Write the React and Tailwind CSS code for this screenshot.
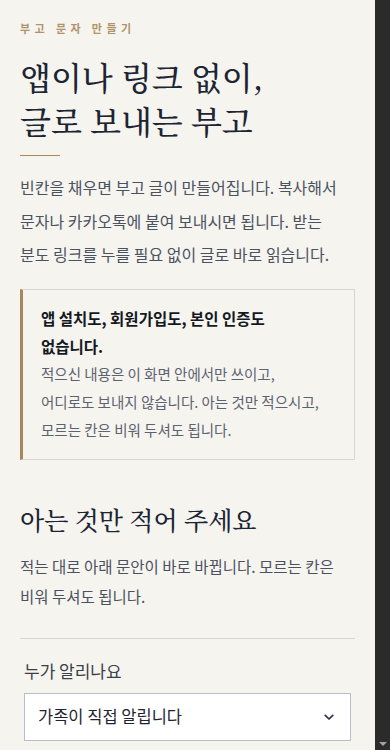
const FONT = { fontFamily: '"Noto Sans CJK KR", "Noto Sans", sans-serif' };
const SERIF = { fontFamily: '"Noto Serif CJK KR", "Noto Sans CJK KR", serif' };

function Chevron() {
  return (
    <svg width="12" height="12" viewBox="0 0 12 12" fill="none" className="text-[#2a3140]">
      <path d="M2.2 4.4 L6 8 L9.8 4.4" stroke="currentColor" strokeWidth="1.7" strokeLinecap="round" strokeLinejoin="round" />
    </svg>
  );
}

function Field({ label, value }) {
  return (
    <div className="px-1">
      <label className="block text-[17px] leading-6 text-[#3a3f48]">{label}</label>
      <div className="mt-[10px] h-12 flex items-center justify-between bg-white border border-[#b9bdc7] pl-[13px] pr-[15px]">
        <span className="text-[16.5px] text-[#1f2530]">{value}</span>
        <Chevron />
      </div>
    </div>
  );
}

export default function App() {
  return (
    <div className="flex h-[750px] overflow-hidden bg-[#f6f4ef]" style={FONT}>
      <main className="flex-1 min-w-0 break-keep">
        <div className="px-5 pt-5 pb-16">
          <p className="text-[11px] leading-4 font-semibold tracking-[0.4em] text-[#b0936a]">부고 문자 만들기</p>

          <h1 className="mt-[18px] text-[32px] leading-[44px] font-medium text-[#1c2533]" style={SERIF}>
            앱이나 링크 없이,
            <br />
            글로 보내는 부고
          </h1>

          <div className="mt-[13px] w-10 h-px bg-[#a8885a]" />

          <p className="mt-[15px] text-[16px] leading-[33.5px] text-[#4a5260]">
            빈칸을 채우면 부고 글이 만들어집니다. 복사해서 문자나 카카오톡에 붙여 보내시면 됩니다. 받는 분도 링크를 누를 필요 없이 글로 바로 읽습니다.
          </p>

          <div className="mt-[17px] border border-[#d9d6cf] border-l-[3px] border-l-[#a8885a] pl-[18px] pr-4 pt-[14px] pb-[15px]">
            <p className="text-[15.5px] leading-[28px] font-bold text-[#14181f]">
              앱 설치도, 회원가입도, 본인 인증도
              <br />
              없습니다.
            </p>
            <p className="text-[14.5px] leading-[28px] text-[#5b6270]">
              적으신 내용은 이 화면 안에서만 쓰이고,
              <br />
              어디로도 보내지 않습니다. 아는 것만 적으시고,
              <br />
              모르는 칸은 비워 두셔도 됩니다.
            </p>
          </div>

          <h2 className="mt-[43px] text-[25px] leading-8 font-medium text-[#1c2533]" style={SERIF}>아는 것만 적어 주세요</h2>

          <p className="mt-[16px] text-[15.5px] leading-[30px] text-[#4a5260]">
            적는 대로 아래 문안이 바로 바뀝니다. 모르는 칸은 비워 두셔도 됩니다.
          </p>

          <div className="mt-[27px] h-px bg-[#d9d6cf]" />

          <div className="mt-5">
            <Field label="누가 알리나요" value="가족이 직접 알립니다" />
          </div>
        </div>
      </main>
      <div className="w-[15px] shrink-0 bg-[#2b2b2b] flex flex-col justify-end items-center pb-[4px]">
        <div className="w-0 h-0 border-l-[4px] border-r-[4px] border-t-[4px] border-l-transparent border-r-transparent border-t-[#a3a3a3]" />
      </div>
    </div>
  );
}
